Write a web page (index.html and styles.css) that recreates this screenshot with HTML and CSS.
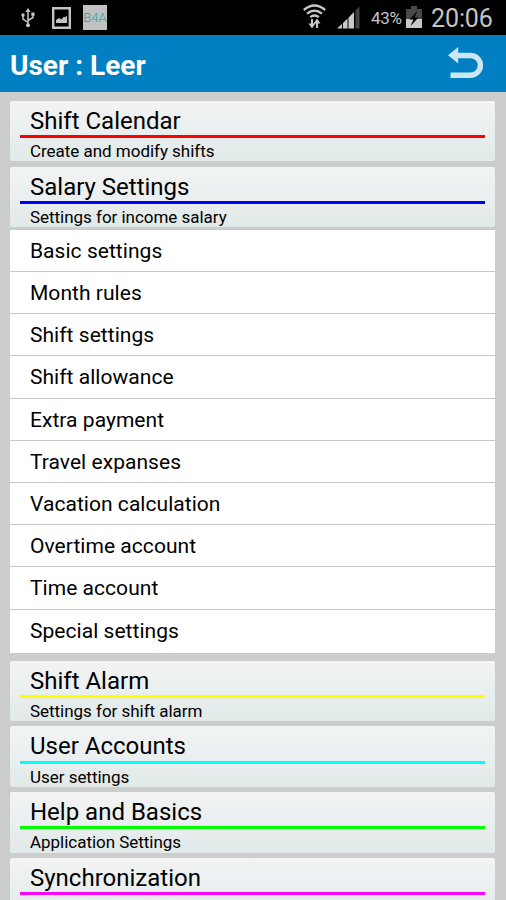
FILE: index.html
```html
<!DOCTYPE html>
<html lang="en">
<head>
<meta charset="utf-8">
<title>User : Leer</title>
<link rel="stylesheet" href="styles.css">
</head>
<body>
<div class="status">
  <svg class="usb" width="14" height="20" viewBox="0 0 14 20" fill="none" stroke="#c4c4c4" stroke-width="1.5"><path d="M7 3v14M7 14.500L2 11V7.500M7 12.500l5-3V6"/><path d="M7 0l2.600 4H4.400z" fill="#c4c4c4" stroke="none"/><circle cx="7" cy="17.200" r="2" fill="#c4c4c4" stroke="none"/><circle cx="2" cy="7" r="1.700" fill="#c4c4c4" stroke="none"/><path d="M10.300 4.500h3.300v3.300h-3.300z" fill="#c4c4c4" stroke="none"/></svg>
  <svg class="photo" width="19" height="22" viewBox="0 0 19 22"><path d="M1.200 1.200h16.600v19.600H1.200z" fill="none" stroke="#c4c4c4" stroke-width="2.400"/><path d="M4 16v-3l3-2 2.500 1.500L12 9.500l1 1 2-2V16z" fill="#c4c4c4"/></svg>
  <span class="b4a">B4A</span>
  <svg class="wifi" width="23" height="25" viewBox="0 0 23 25" fill="none" stroke="#c9c9c9" stroke-width="2.300"><path d="M.8 6Q11.500-3 22.200 6M4 9.700Q11.500 3.500 19 9.700M7.200 13.200q4.300-3.400 8.600 0"/><path d="M9 15v7M14 24v-7" stroke-width="2"/><path d="M5.500 19.500h7L9 24.500zM10.500 19.500h7L14 14.500z" fill="#c9c9c9" stroke="none"/></svg>
  <svg class="signal" width="23" height="23" viewBox="0 0 23 23"><path d="M0 22.500L5 18v4.500zM6 17l4.500-4.500v10H6zM11.500 11.500l5.500-5.500v16.500h-5.500z" fill="#c9c9c9"/><path d="M18.500 4.500L22.500.5v22h-4z" fill="#444"/></svg>
  <span class="percent">43%</span>
  <svg class="battery" width="16" height="22" viewBox="0 0 16 22"><path d="M5 0h6v3h5v10H0V3h5z" fill="#484848"/><path d="M0 13h16v9H0z" fill="#c9c9c9"/><path d="M11.500 5L3.500 13.500h4L4.500 20l8-8.500h-4z" fill="#000"/></svg>
  <span class="clock">20:06</span>
</div>
<header class="bar">
  <h1>User : Leer</h1>
  <svg class="back" width="36" height="34" viewBox="0 0 36 34"><path d="M9 8.500h13.500a9.900 9.900 0 0 1 0 19.800H2.500" fill="none" stroke="#cce6f5" stroke-width="5.400"/><path d="M0 8.200L10.200 0v16.500z" fill="#cce6f5"/></svg>
</header>
<main>
  <section class="card red"><h2>Shift Calendar</h2><p>Create and modify shifts</p></section>
  <section class="card blue"><h2>Salary Settings</h2><p>Settings for income salary</p></section>
  <ul>
    <li>Basic settings</li>
    <li>Month rules</li>
    <li>Shift settings</li>
    <li>Shift allowance</li>
    <li>Extra payment</li>
    <li>Travel expanses</li>
    <li>Vacation calculation</li>
    <li>Overtime account</li>
    <li>Time account</li>
    <li>Special settings</li>
  </ul>
  <section class="card yellow"><h2>Shift Alarm</h2><p>Settings for shift alarm</p></section>
  <section class="card cyan"><h2>User Accounts</h2><p>User settings</p></section>
  <section class="card green"><h2>Help and Basics</h2><p>Application Settings</p></section>
  <section class="card magenta"><h2>Synchronization</h2></section>
</main>
</body>
</html>
```
FILE: styles.css
```css
* { box-sizing: border-box; margin: 0; padding: 0; }
body { height: 900px; overflow: hidden; background: #ccc; color: #000; font-family: Roboto, sans-serif; }
.status { display: flex; align-items: flex-start; height: 35px; background: #000; color: #c4c4c4; white-space: nowrap; }
.usb { margin: 8px 0 0 21px; }
.photo { margin: 7px 0 0 17px; }
.b4a { width: 24px; height: 25px; margin: 5px 0 0 12px; background: #c0c2c2; color: #2b9d90; font-size: 13px; font-weight: 300; line-height: 25px; text-align: center; }
.wifi { margin: 4px 0 0 196px; }
.signal { margin: 6px 0 0 11px; }
.percent { width: 32px; margin: 8px 0 0 11px; font-size: 17px; line-height: 20px; letter-spacing: -.3px; }
.battery { margin: 6px 0 0 3px; }
.clock { margin: 4px 0 0 9px; font-size: 25px; line-height: 30px; letter-spacing: -.1px; }
.bar { display: flex; justify-content: space-between; align-items: flex-start; height: 57px; padding: 12px 22px 0 10px; background: #0080c2; color: #fff; }
.bar h1 { font-size: 28px; line-height: 37px; font-weight: 700; }
main { padding: 8.900px 11px 0 10px; }
.card { height: 60.500px; margin-bottom: 5.170px; padding: 0 10px; border-radius: 2px; background: linear-gradient(#f3f4f4, #e1e9e9); }
.card h2 { height: 37.300px; border-bottom: 3px solid; font-size: 24px; font-weight: 400; line-height: 40px; white-space: nowrap; padding-left: 10px; }
.card h2::first-line { color: #000; }
.card p { padding-left: 10px; font-size: 17px; line-height: 26px; letter-spacing: -.03px; }
.red h2 { border-color: #f00; }
.blue h2 { border-color: #00f; }
.yellow h2 { border-color: #ff0; }
.cyan h2 { border-color: #0ff; }
.green h2 { border-color: #0f0; }
.magenta h2 { border-color: #f0f; }
ul { list-style: none; margin: -2.400px 0 8.300px; background: #fff; }
li { height: 42.200px; padding-left: 20px; border-bottom: 1px solid #c8c8c8; font-size: 21px; line-height: 43px; letter-spacing: .04px; }
li:last-child { height: 43px; border-bottom: 0; }
```
